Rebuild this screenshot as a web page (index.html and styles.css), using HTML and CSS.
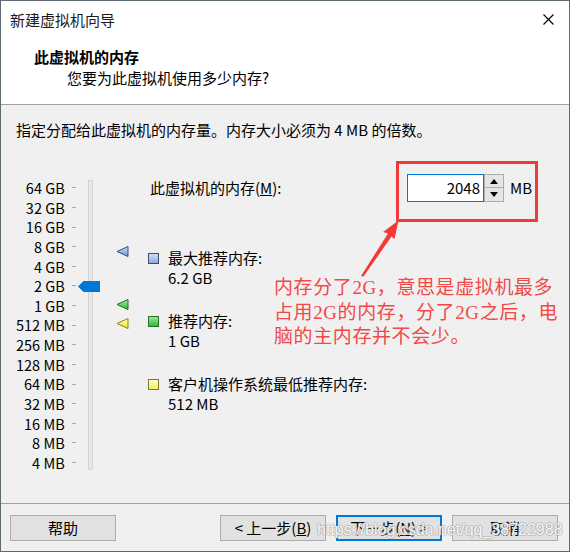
FILE: index.html
```html
<!DOCTYPE html>
<html lang="zh">
<head>
<meta charset="utf-8">
<title>新建虚拟机向导</title>
<link rel="stylesheet" href="styles.css">
</head>
<body>
<div class="window">
  <div class="titlebar">
    <span class="title">新建虚拟机向导</span>
    <span class="close"><svg width="11" height="11" viewBox="0 0 11 11"><path d="M0.5 0.5 L10.5 10.5 M10.5 0.5 L0.5 10.5" stroke="#000" stroke-width="1.1" fill="none"/></svg></span>
  </div>
  <div class="header">
    <div class="h-title">此虚拟机的内存</div>
    <div class="h-sub">您要为此虚拟机使用多少内存?</div>
  </div>
  <div class="body">
    <p class="desc">指定分配给此虚拟机的内存量。内存大小必须为 4 MB 的倍数。</p>
    <div class="main">
      <div class="scale">
        <div class="labels">
          <span>64 GB</span><span>32 GB</span><span>16 GB</span><span>8 GB</span><span>4 GB</span><span>2 GB</span><span>1 GB</span><span>512 MB</span><span>256 MB</span><span>128 MB</span><span>64 MB</span><span>32 MB</span><span>16 MB</span><span>8 MB</span><span>4 MB</span>
        </div>
        <div class="ticks">
          <i></i><i></i><i></i><i></i><i></i><i></i><i></i><i></i><i></i><i></i><i></i><i></i><i></i><i></i><i></i>
        </div>
        <div class="track"><div class="thumb"><svg width="22" height="11" viewBox="0 0 22 11"><polygon points="0,5.5 5.5,0 22,0 22,11 5.5,11" fill="#0078d7"/></svg></div></div>
      </div>
      <div class="markers">
        <svg class="mk mk-max" width="13" height="11" viewBox="0 0 13 11"><defs><linearGradient id="gb" x1="0" y1="0" x2="0" y2="1"><stop offset="0" stop-color="#c9daf2"/><stop offset="1" stop-color="#6f93cc"/></linearGradient></defs><polygon points="1,5.5 12,0.5 12,10.5" fill="url(#gb)" stroke="#2f4d86" stroke-width="1"/></svg>
        <svg class="mk mk-rec" width="13" height="11" viewBox="0 0 13 11"><defs><linearGradient id="gg" x1="0" y1="0" x2="0" y2="1"><stop offset="0" stop-color="#a6f0a6"/><stop offset="1" stop-color="#2fb52f"/></linearGradient></defs><polygon points="1,5.5 12,0.5 12,10.5" fill="url(#gg)" stroke="#1d6e1d" stroke-width="1"/></svg>
        <svg class="mk mk-min" width="13" height="11" viewBox="0 0 13 11"><defs><linearGradient id="gy" x1="0" y1="0" x2="0" y2="1"><stop offset="0" stop-color="#ffffb0"/><stop offset="1" stop-color="#f0e020"/></linearGradient></defs><polygon points="1,5.5 12,0.5 12,10.5" fill="url(#gy)" stroke="#8a8420" stroke-width="1"/></svg>
      </div>
      <div class="content">
        <div class="memrow">
          <span class="memlabel">此虚拟机的内存(<u>M</u>):</span>
          <div class="spin">
            <div class="spin-input">2048</div>
            <div class="spin-btns">
              <span class="sb"><svg width="8" height="5" viewBox="0 0 8 5"><polygon points="4,0 8,5 0,5" fill="#000"/></svg></span>
              <span class="sb"><svg width="8" height="5" viewBox="0 0 8 5"><polygon points="0,0 8,0 4,5" fill="#000"/></svg></span>
            </div>
          </div>
          <span class="unit">MB</span>
        </div>
        <div class="legend">
          <div class="item"><span class="sq sq-blue"></span><div class="txt"><div>最大推荐内存:</div><div>6.2 GB</div></div></div>
          <div class="item"><span class="sq sq-green"></span><div class="txt"><div>推荐内存:</div><div>1 GB</div></div></div>
          <div class="item"><span class="sq sq-yellow"></span><div class="txt"><div>客户机操作系统最低推荐内存:</div><div>512 MB</div></div></div>
        </div>
      </div>
    </div>
  </div>
  <div class="footer">
    <button class="btn">帮助</button>
    <div class="btn-group">
      <button class="btn">&lt; 上一步(<u>B</u>)</button>
      <button class="btn btn-focus">下一步(<u>N</u>) &gt;</button>
      <button class="btn">取消</button>
    </div>
  </div>

  <div class="redbox"></div>
  <svg class="arrow" width="570" height="552" viewBox="0 0 570 552"><path d="M398.5,220.5 L383,232 L388,233.5 L361,276 L363.5,276.5 L391.5,236.5 L394.5,239 Z" fill="#f23a3a"/></svg>
  <div class="note">内存分了2G，意思是虚拟机最多<br>占用2G的内存，分了2G之后，电<br>脑的主内存并不会少。</div>
  <div class="watermark">https://blog.csdn.net/qq_38722988</div>
</div>
</body>
</html>
```
FILE: styles.css
```css
* { box-sizing: border-box; }
html, body { margin: 0; padding: 0; }
body {
  font-family: "Noto Sans CJK SC", "Noto Sans", sans-serif;
  font-size: 15px;
  color: #000;
  background: #fff;
}
.window {
  position: relative;
  width: 570px;
  height: 552px;
  border: 1px solid #5e6a72;
  display: flex;
  flex-direction: column;
  overflow: hidden;
}
.titlebar {
  height: 37px;
  background: #fff;
  display: flex;
  align-items: center;
  padding-left: 9px;
  line-height: 20px;
}
.title { flex: 1; color: #1a1a1a; }
.close { display: flex; margin-right: 15px; margin-top: 0px; }
.header {
  height: 67px;
  background: #fff;
  border-bottom: 1px solid #a0a0a0;
  padding-top: 9px;
  line-height: 20px;
}
.h-title { font-weight: 700; padding-left: 33px; }
.h-sub { padding-left: 66px; margin-top: 1px; }
.body {
  flex: 1;
  background: #f0f0f0;
  padding: 15px 0 0 15px;
}
.desc { margin: 0; line-height: 20px; }
.main {
  display: flex;
  margin-top: 34px;
  align-items: flex-start;
}
.scale {
  display: flex;
  margin-top: 4px;
}
.labels {
  width: 47px;
  display: grid;
  grid-auto-rows: 19.64px;
  align-items: center;
  text-align: right;
  font-size: 14.5px;
  line-height: 19.64px;
  white-space: nowrap;
}
.ticks {
  width: 4px;
  margin-left: 9px;
  display: grid;
  grid-auto-rows: 19.64px;
  align-items: center;
}
.ticks i { display: block; height: 1px; background: #a8a8a8; }
.track {
  position: relative;
  width: 5px;
  height: 290px;
  margin-left: 12px;
  margin-top: 2px;
  background: #e6e6e6;
  border: 1px solid #d4d4d4;
}
.thumb {
  position: absolute;
  left: -11px;
  top: 100px;
  width: 22px;
  height: 11px;
  display: flex;
}
.markers {
  position: relative;
  width: 13px;
  height: 294px;
  margin-left: 23px;
  margin-top: 4px;
}
.mk { position: absolute; left: 0; }
.mk-max { top: 68px; }
.mk-rec { top: 121px; }
.mk-min { top: 140px; }
.content {
  margin-left: 19px;
  display: flex;
  flex-direction: column;
}
.memrow {
  display: grid;
  grid-template-columns: 259px auto auto;
  align-items: center;
  height: 28px;
}
.memlabel { padding-left: 2px; line-height: 20px; }
.spin { display: flex; }
.spin-input {
  width: 77px;
  height: 28px;
  background: #fff;
  border: 1px solid #0078d7;
  text-align: right;
  padding-right: 3px;
  line-height: 26px;
  font-size: 15px;
}
.spin-btns { display: flex; flex-direction: column; }
.sb {
  width: 20px;
  height: 14px;
  background: #e5e5e5;
  border: 1px solid #adadad;
  display: flex;
  align-items: center;
  justify-content: center;
}
.sb + .sb { border-top: none; height: 14px; }
.unit { margin-left: 6px; line-height: 20px; }
.legend {
  margin-top: 46px;
  display: flex;
  flex-direction: column;
  gap: 23px;
}
.item { display: flex; align-items: flex-start; }
.txt { line-height: 20px; }
.sq {
  width: 11px;
  height: 11px;
  margin-top: 5px;
  margin-right: 9px;
  border: 1px solid;
  flex: none;
}
.sq-blue { border-color: #3a4f78; background: linear-gradient(#d3e0f3, #8eaad6); }
.sq-green { border-color: #2a6a2a; background: linear-gradient(#96ea96, #36b836); }
.sq-yellow { border-color: #7a7a30; background: linear-gradient(#ffffc8, #f5f060); }
.footer {
  height: 48px;
  background: #f0f0f0;
  border-top: 1px solid #a0a0a0;
  display: flex;
  align-items: flex-start;
  padding: 11px 11px 0 9px;
}
.btn-group { margin-left: auto; display: flex; gap: 10px; }
.btn {
  width: 106px;
  height: 26px;
  background: #e1e1e1;
  border: 1px solid #adadad;
  font-family: inherit;
  font-size: 15px;
  color: #000;
  padding: 0;
  line-height: 22px;
}
.btn-focus { border: 2px solid #0078d7; }
.redbox {
  position: absolute;
  left: 395px;
  top: 160px;
  width: 142px;
  height: 61px;
  border: 3px solid #f23a3a;
}
.arrow { position: absolute; left: -1px; top: -1px; }
.note {
  position: absolute;
  left: 273px;
  top: 275px;
  font-family: "Liberation Serif", "Noto Sans CJK SC", serif;
  font-size: 19px;
  letter-spacing: 0.6px;
  line-height: 24.5px;
  color: #f24848;
  white-space: nowrap;
}
.watermark {
  position: absolute;
  left: 316px;
  top: 519px;
  font-family: "Liberation Sans", sans-serif;
  font-size: 16px;
  line-height: 20px;
  color: rgba(255, 255, 255, 0.92);
  text-shadow: 1px 0 0 rgba(150, 150, 150, 0.45), -1px 0 0 rgba(150, 150, 150, 0.45), 0 1px 0 rgba(150, 150, 150, 0.45), 0 -1px 0 rgba(150, 150, 150, 0.45);
  white-space: nowrap;
}
```
